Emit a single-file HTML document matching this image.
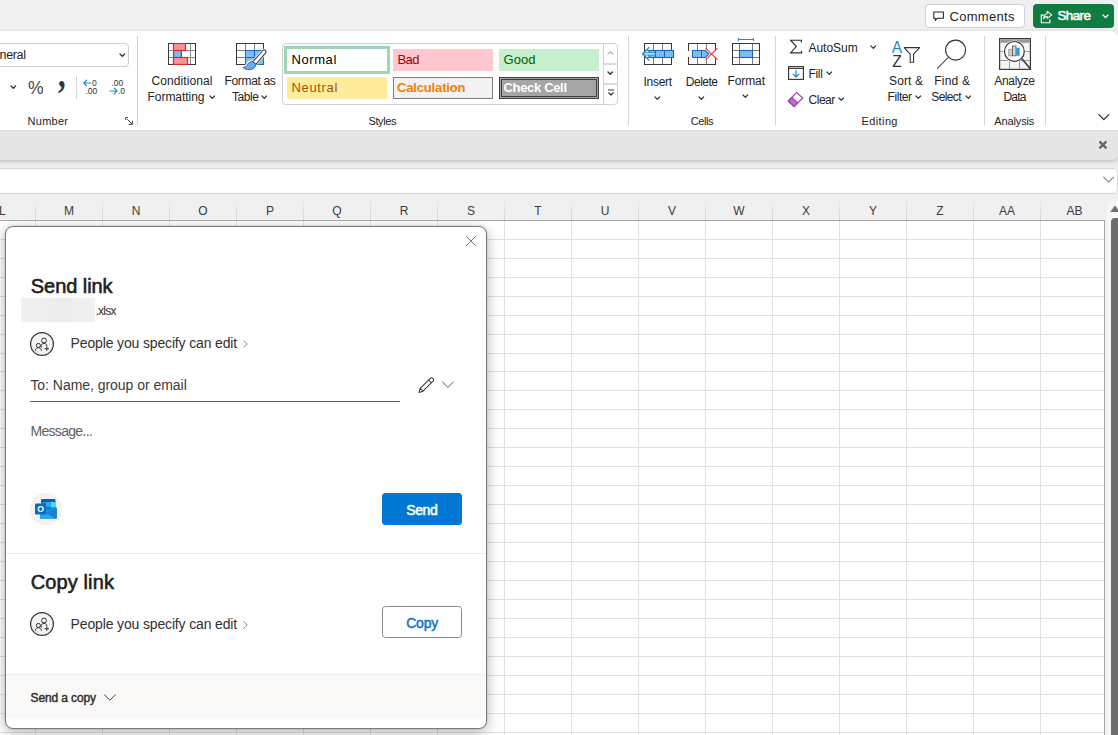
<!DOCTYPE html>
<html><head><meta charset="utf-8"><title>Excel - Send link</title>
<style>
html,body{margin:0;padding:0;}
body{width:1118px;height:735px;overflow:hidden;background:#f0f0f0;position:relative;font-family:"Liberation Sans",sans-serif;}
.t{position:absolute;white-space:nowrap;line-height:1;}
.b{position:absolute;box-sizing:border-box;}
</style></head><body>
<div class="b" style="left:925px;top:4px;width:100px;height:24px;background:#fff;border:1px solid #d1d1d1;border-radius:4px;"></div>
<svg class="b" style="left:933.3px;top:11px;" width="13" height="11" viewBox="0 0 13 11"><path d="M0.8 0.9 H10.4 V7.2 H4.4 L2.3 9.4 V7.2 H0.8 Z" fill="none" stroke="#242424" stroke-width="1.05" stroke-linejoin="round"/></svg>
<span class="t" style="left:949.50px;top:9.70px;font-size:13px;letter-spacing:0.307px;color:#242424;">Comments</span>
<div class="b" style="left:1033px;top:4px;width:81px;height:24px;background:#107c41;border-radius:4px;"></div>
<svg class="b" style="left:1040.4px;top:9.6px;" width="14.3" height="14.3" viewBox="0 0 13 13"><path d="M3.4 4.6 H1.2 V11.6 H9 V8.6" fill="none" stroke="#fff" stroke-width="1.05"/><path d="M6.6 1.2 L10.6 4.4 L6.6 7.6 V5.8 C5 5.8 4 6.5 3.4 8 C3.5 5.2 4.7 3.6 6.6 3.2 Z" fill="none" stroke="#fff" stroke-width="0.95" stroke-linejoin="round"/></svg>
<span class="t" style="left:1057.40px;top:9.47px;font-size:13.5px;letter-spacing:-0.607px;-webkit-text-stroke:0.5px #fff;color:#fff;">Share</span>
<svg class="b" style="left:1101.7px;top:14.2px;" width="7" height="4.6" viewBox="0 0 7 4.6"><path d="M1 1 L3.5 3.6 L6 1" fill="none" stroke="#fff" stroke-width="1.3" stroke-linecap="round" stroke-linejoin="round"/></svg>
<div class="b" style="left:-10px;top:28px;width:1130px;height:3px;background:linear-gradient(#f0f0f0,#e7e7e7);"></div>
<div class="b" style="left:-10px;top:31px;width:1128px;height:99px;background:#fff;border-radius:0 8px 0 0;box-shadow:0 -1px 0 #e6e6e6;"></div>
<div class="b" style="left:136.5px;top:36px;width:1px;height:89px;background:#d4d4d4;"></div>
<div class="b" style="left:628px;top:36px;width:1px;height:89px;background:#d4d4d4;"></div>
<div class="b" style="left:775px;top:36px;width:1px;height:89px;background:#d4d4d4;"></div>
<div class="b" style="left:983.5px;top:36px;width:1px;height:89px;background:#d4d4d4;"></div>
<div class="b" style="left:1045px;top:36px;width:1px;height:89px;background:#d4d4d4;"></div>
<div class="b" style="left:-10px;top:43px;width:138.5px;height:24px;background:#fff;border:1px solid #d1d1d1;border-radius:4px;"></div>
<span class="t" style="left:-0.50px;top:49.42px;font-size:12.5px;letter-spacing:-0.324px;color:#242424;">neral</span>
<svg class="b" style="left:119.1px;top:53.1px;" width="6.6" height="4.4" viewBox="0 0 6.6 4.4"><path d="M1 1 L3.3 3.4 L5.6 1" fill="none" stroke="#333" stroke-width="1.3" stroke-linecap="round" stroke-linejoin="round"/></svg>
<svg class="b" style="left:10.1px;top:85.2px;" width="6.6" height="4.4" viewBox="0 0 6.6 4.4"><path d="M1 1 L3.3 3.4 L5.6 1" fill="none" stroke="#333" stroke-width="1.3" stroke-linecap="round" stroke-linejoin="round"/></svg>
<span class="t" style="left:27.80px;top:77.92px;font-size:19px;color:#484848;transform:scaleX(0.92);transform-origin:left;">%</span>
<span class="t" style="left:58.2px;top:54px;font-size:39px;font-family:'Liberation Serif',serif;font-weight:bold;color:#333;transform:scaleX(0.78);transform-origin:left;">,</span>
<div class="b" style="left:76px;top:76px;width:1px;height:23px;background:#d4d4d4;"></div>
<svg class="b" style="left:83px;top:79px;" width="17" height="16" viewBox="0 0 17 16"><g font-family="Liberation Sans, sans-serif" font-size="8.5" fill="#333"><text x="9" y="7">0</text><text x="2.5" y="15">.00</text><path d="M0.8 4 H8 M3.6 1.2 L0.8 4 L3.6 6.8" fill="none" stroke="#1e8bcd" stroke-width="1.2" stroke-linecap="round" stroke-linejoin="round"/></g></svg>
<svg class="b" style="left:109px;top:79px;" width="17" height="16" viewBox="0 0 17 16"><g font-family="Liberation Sans, sans-serif" font-size="8.5" fill="#333"><text x="2.5" y="7">.00</text><text x="9" y="15">.0</text><path d="M0.8 12 H8 M5.2 9.2 L8 12 L5.2 14.8" fill="none" stroke="#1e8bcd" stroke-width="1.2" stroke-linecap="round" stroke-linejoin="round"/></g></svg>
<span class="t" style="left:27.60px;top:115.69px;font-size:11px;letter-spacing:0.255px;color:#242424;">Number</span>
<svg class="b" style="left:125px;top:117px;" width="9" height="9" viewBox="0 0 9 9"><path d="M0.6 3 V0.6 H3 M2.2 2.2 L7.2 7.2 M7.4 3.6 V7.4 H3.6" fill="none" stroke="#444" stroke-width="1"/></svg>
<svg class="b" style="left:168px;top:43px;" width="28" height="22" viewBox="0 0 28 22"><rect x="0.5" y="0.5" width="27" height="21" fill="#fdfdfd" stroke="#3a3a3a"/><path d="M5.5 1 V21" stroke="#8a8a8a"/><path d="M22.5 1 V21" stroke="#8a8a8a"/><path d="M1 7.5 H27" stroke="#8a8a8a"/><path d="M1 14.5 H27" stroke="#8a8a8a"/><rect x="5.5" y="7.5" width="8" height="7" fill="#7fbcec"/><path d="M5.6 7.5 V14.5 M13.4 7.5 V14.5" stroke="#1565c0" stroke-width="1.2"/><rect x="5.5" y="0.5" width="12" height="7" fill="#fc9299" stroke="#df2a20" stroke-width="1.2"/><rect x="5.5" y="14.5" width="14" height="7" fill="#fc9299" stroke="#df2a20" stroke-width="1.2"/></svg>
<span class="t" style="left:151.50px;top:74.64px;font-size:12px;letter-spacing:0.096px;color:#242424;">Conditional</span>
<span class="t" style="left:147.50px;top:90.64px;font-size:12px;letter-spacing:-0.039px;color:#242424;">Formatting</span>
<svg class="b" style="left:208.5px;top:95.2px;" width="6.6" height="4.4" viewBox="0 0 6.6 4.4"><path d="M1 1 L3.3 3.4 L5.6 1" fill="none" stroke="#333" stroke-width="1.2" stroke-linecap="round" stroke-linejoin="round"/></svg>
<svg class="b" style="left:236px;top:43px;" width="32" height="29" viewBox="0 0 32 29"><rect x="0.5" y="0.5" width="27" height="21" fill="#fdfdfd" stroke="#3a3a3a"/><rect x="10" y="8" width="17.5" height="13.5" fill="#83bbec"/><path d="M9.5 1 V21" stroke="#7a7a7a"/><path d="M18.5 1 V21" stroke="#7a7a7a"/><path d="M1 7.5 H27" stroke="#7a7a7a"/><path d="M1 14.5 H27" stroke="#7a7a7a"/><path d="M9.5 7.5 H27.5 V21.5 H9.5 Z M18.5 7.5 V21.5 M9.5 14.5 H27.5" fill="none" stroke="#1b6ec4" stroke-width="1.1"/><path d="M29.3 7.3 C30.3 8 30 9.4 29.2 10.4 L19.8 21.4 C19.8 25 16.6 27 13.6 27 C10.6 27 8 26 6.6 24.2 C9.4 24.2 10.6 23.2 11.4 21.2 C12.2 19.2 14.2 18 16.4 18.8 L26.4 8 C27.2 7.1 28.4 6.7 29.3 7.3 Z" fill="#fefefe" stroke="#fefefe" stroke-width="2.4" stroke-linejoin="round"/><path d="M29.3 7.3 C30.3 8 30 9.4 29.2 10.4 L19.9 21.3 L16.6 18.9 L26.4 8 C27.2 7.1 28.4 6.7 29.3 7.3 Z" fill="#fff" stroke="#3a3a3a" stroke-width="1.05" stroke-linejoin="round"/><path d="M16.6 18.9 L19.9 21.3 C19.8 24.6 16.8 26.6 13.6 26.6 C10.8 26.6 8.4 25.8 7 24.4 C9.8 24.2 10.9 23 11.7 21.2 C12.5 19.4 14.6 18.2 16.6 18.9 Z" fill="#6aaee9" stroke="#1b6ec4" stroke-width="1" stroke-linejoin="round"/></svg>
<span class="t" style="left:224.50px;top:74.64px;font-size:12px;letter-spacing:-0.339px;color:#242424;">Format as</span>
<span class="t" style="left:232.00px;top:90.64px;font-size:12px;letter-spacing:-0.422px;color:#242424;">Table</span>
<svg class="b" style="left:260.9px;top:95.2px;" width="6.6" height="4.4" viewBox="0 0 6.6 4.4"><path d="M1 1 L3.3 3.4 L5.6 1" fill="none" stroke="#333" stroke-width="1.2" stroke-linecap="round" stroke-linejoin="round"/></svg>
<div class="b" style="left:282px;top:43px;width:336px;height:61.5px;background:#fff;border:1px solid #d1d1d1;border-radius:4px;"></div>
<div class="b" style="left:284px;top:46px;width:106px;height:28px;background:#fff;border:3px solid #9fd5b7;"></div>
<span class="t" style="left:291.50px;top:52.70px;font-size:13px;letter-spacing:0.581px;color:#000;">Normal</span>
<div class="b" style="left:393px;top:49px;width:100px;height:22px;background:#ffc7ce;"></div>
<span class="t" style="left:397.50px;top:52.70px;font-size:13px;letter-spacing:-0.566px;color:#9c0006;">Bad</span>
<div class="b" style="left:499px;top:49px;width:100px;height:22px;background:#c6efce;"></div>
<span class="t" style="left:503.50px;top:52.70px;font-size:13px;letter-spacing:0.066px;color:#006100;">Good</span>
<div class="b" style="left:287px;top:77px;width:99.5px;height:21.5px;background:#ffeb9c;"></div>
<span class="t" style="left:291.50px;top:80.60px;font-size:13px;letter-spacing:0.649px;color:#9c5700;">Neutral</span>
<div class="b" style="left:393px;top:77px;width:100px;height:21.5px;background:#f2f2f2;border:1px solid #7f7f7f;"></div>
<span class="t" style="left:397.00px;top:80.60px;font-size:13px;letter-spacing:-0.157px;font-weight:bold;color:#fa7d00;">Calculation</span>
<div class="b" style="left:499px;top:77px;width:100px;height:21.5px;background:#a5a5a5;border:1px solid #3f3f3f;box-shadow:inset 0 0 0 1px #a5a5a5, inset 0 0 0 2px #3f3f3f;"></div>
<span class="t" style="left:503.50px;top:80.60px;font-size:13px;letter-spacing:-0.330px;font-weight:bold;color:#fff;">Check Cell</span>
<div class="b" style="left:603px;top:43.5px;width:1px;height:60.5px;background:#d1d1d1;"></div>
<div class="b" style="left:604px;top:63px;width:13.5px;height:2px;background:#dcdcdc;"></div>
<div class="b" style="left:604px;top:82.5px;width:13.5px;height:2px;background:#dcdcdc;"></div>
<svg class="b" style="left:606px;top:50px;" width="9" height="6" viewBox="0 0 9 6"><path d="M2 4 L4.5 1.7 L7 4" fill="none" stroke="#b5b5b5" stroke-width="1.2" stroke-linecap="round" stroke-linejoin="round"/></svg>
<svg class="b" style="left:607.2px;top:71.05px;" width="6.4" height="4.3" viewBox="0 0 6.4 4.3"><path d="M1 1 L3.2 3.3 L5.4 1" fill="none" stroke="#333" stroke-width="1.3" stroke-linecap="round" stroke-linejoin="round"/></svg>
<svg class="b" style="left:605.5px;top:88px;" width="10" height="10" viewBox="0 0 10 10"><path d="M2.4 2 H7.6" stroke="#333" stroke-width="1.1" stroke-linecap="round"/><path d="M2.7 4.8 L5 7 L7.3 4.8" fill="none" stroke="#333" stroke-width="1.2" stroke-linecap="round" stroke-linejoin="round"/></svg>
<span class="t" style="left:368.50px;top:115.69px;font-size:11px;letter-spacing:-0.391px;color:#242424;">Styles</span>
<svg class="b" style="left:642px;top:43px;" width="33" height="22" viewBox="0 0 33 22"><rect x="2.5" y="0.5" width="27" height="21" fill="#fdfdfd" stroke="#3a3a3a"/><path d="M11.5 1 V21" stroke="#7a7a7a"/><path d="M20.5 1 V21" stroke="#7a7a7a"/><path d="M3 7.5 H29" stroke="#7a7a7a"/><path d="M3 14.5 H29" stroke="#7a7a7a"/><rect x="7" y="7.5" width="24.5" height="7" fill="#7fbcec" stroke="#1565c0" stroke-width="1.1"/><path d="M13.5 7.5 V14.5 M22.5 7.5 V14.5" stroke="#1565c0"/><path d="M1.8 10.9 H12.4" stroke="#1e8bcd" stroke-width="3.2" stroke-linecap="round"/><path d="M2.6 10.9 H12.2" stroke="#fff" stroke-width="1.2" stroke-linecap="round"/><path d="M7 4.5 L0.9 10.9 L7 17.3" fill="none" stroke="#1e8bcd" stroke-width="1.25" stroke-linecap="round" stroke-linejoin="round"/></svg>
<span class="t" style="left:643.60px;top:75.84px;font-size:12px;letter-spacing:-0.322px;color:#242424;">Insert</span>
<svg class="b" style="left:654px;top:95.6px;" width="6.6" height="4.4" viewBox="0 0 6.6 4.4"><path d="M1 1 L3.3 3.4 L5.6 1" fill="none" stroke="#333" stroke-width="1.2" stroke-linecap="round" stroke-linejoin="round"/></svg>
<svg class="b" style="left:688px;top:43px;" width="31" height="22" viewBox="0 0 31 22"><rect x="0.5" y="0.5" width="27" height="21" fill="#fdfdfd" stroke="#3a3a3a"/><path d="M9.5 1 V21" stroke="#7a7a7a"/><path d="M18.5 1 V21" stroke="#7a7a7a"/><path d="M1 7.5 H27" stroke="#7a7a7a"/><path d="M1 14.5 H27" stroke="#7a7a7a"/><rect x="0" y="8" width="28" height="6" fill="#fbfbfb"/><rect x="1" y="7" width="26" height="8" fill="#fbfbfb"/><path d="M4.5 7.5 H17.2 L20.8 11 L17.2 14.5 H4.5 Z" fill="#7fbcec" stroke="#1565c0" stroke-width="1.1"/><path d="M13.5 7.5 V14.5" stroke="#1565c0"/><path d="M18 5.6 L29 16.4 M29 5.6 L18 16.4" stroke="#e8474c" stroke-width="1.3" stroke-linecap="round"/></svg>
<span class="t" style="left:685.80px;top:75.84px;font-size:12px;letter-spacing:-0.498px;color:#242424;">Delete</span>
<svg class="b" style="left:698.2px;top:95.6px;" width="6.6" height="4.4" viewBox="0 0 6.6 4.4"><path d="M1 1 L3.3 3.4 L5.6 1" fill="none" stroke="#333" stroke-width="1.2" stroke-linecap="round" stroke-linejoin="round"/></svg>
<svg class="b" style="left:732px;top:43px;" width="28" height="22" viewBox="0 0 28 22"><rect x="0.5" y="0.5" width="27" height="21" fill="#fdfdfd" stroke="#3a3a3a"/><path d="M7.5 1 V21" stroke="#7a7a7a"/><path d="M20.5 1 V21" stroke="#7a7a7a"/><path d="M1 7.5 H27" stroke="#7a7a7a"/><path d="M1 14.5 H27" stroke="#7a7a7a"/><rect x="7.5" y="7.5" width="13" height="7" fill="#7fbcec" stroke="#1565c0" stroke-width="1.1"/></svg>
<svg class="b" style="left:737px;top:37px;" width="18" height="5" viewBox="0 0 18 5"><path d="M1.5 1 V4 M16.5 1 V4 M1.5 2.5 H16.5" stroke="#1e8bcd" stroke-width="1.1" fill="none"/></svg>
<span class="t" style="left:727.50px;top:74.64px;font-size:12px;letter-spacing:-0.101px;color:#242424;">Format</span>
<svg class="b" style="left:742.4px;top:94.4px;" width="6.6" height="4.4" viewBox="0 0 6.6 4.4"><path d="M1 1 L3.3 3.4 L5.6 1" fill="none" stroke="#333" stroke-width="1.2" stroke-linecap="round" stroke-linejoin="round"/></svg>
<span class="t" style="left:690.80px;top:115.69px;font-size:11px;letter-spacing:-0.463px;color:#242424;">Cells</span>
<svg class="b" style="left:789px;top:39px;" width="15" height="16" viewBox="0 0 15 16"><path d="M12.4 3.4 V1.2 H1.6 L7.3 7.6 L1.6 13.9 H12.6 V11.7" fill="none" stroke="#333" stroke-width="1.15" stroke-linejoin="miter"/></svg>
<span class="t" style="left:808.50px;top:41.84px;font-size:12px;letter-spacing:-0.027px;color:#242424;">AutoSum</span>
<svg class="b" style="left:870.2px;top:45.4px;" width="6.6" height="4.4" viewBox="0 0 6.6 4.4"><path d="M1 1 L3.3 3.4 L5.6 1" fill="none" stroke="#333" stroke-width="1.2" stroke-linecap="round" stroke-linejoin="round"/></svg>
<svg class="b" style="left:787.5px;top:65.5px;" width="17" height="15" viewBox="0 0 17 15"><rect x="0.6" y="0.6" width="14.8" height="12.8" fill="#fff" stroke="#333" stroke-width="1.1"/><path d="M0.6 2.4 H15.4" stroke="#333" stroke-width="1.1"/><path d="M8 4.4 V11 M5.1 8.1 L8 11 L10.9 8.1" fill="none" stroke="#1e8bcd" stroke-width="1.2" stroke-linecap="round" stroke-linejoin="round"/></svg>
<span class="t" style="left:808.50px;top:68.04px;font-size:12px;letter-spacing:-0.343px;color:#242424;">Fill</span>
<svg class="b" style="left:826.2px;top:71px;" width="6.6" height="4.4" viewBox="0 0 6.6 4.4"><path d="M1 1 L3.3 3.4 L5.6 1" fill="none" stroke="#333" stroke-width="1.2" stroke-linecap="round" stroke-linejoin="round"/></svg>
<svg class="b" style="left:787px;top:90.5px;" width="18" height="17" viewBox="0 0 18 17"><path d="M9.6 1.4 L15.6 7 L7 15.6 L1.4 10 Z" fill="#fff" stroke="#a63fb5" stroke-width="1.2" stroke-linejoin="round"/><path d="M4.9 6.4 L10.6 12 L7 15.6 L1.4 10 Z" fill="#c46ad0" stroke="#a63fb5" stroke-width="1.2" stroke-linejoin="round"/></svg>
<span class="t" style="left:808.50px;top:93.74px;font-size:12px;letter-spacing:-0.469px;color:#242424;">Clear</span>
<svg class="b" style="left:838.4px;top:97.2px;" width="6.6" height="4.4" viewBox="0 0 6.6 4.4"><path d="M1 1 L3.3 3.4 L5.6 1" fill="none" stroke="#333" stroke-width="1.2" stroke-linecap="round" stroke-linejoin="round"/></svg>
<svg class="b" style="left:892px;top:40px;" width="30" height="28" viewBox="0 0 30 28"><g font-family="Liberation Sans, sans-serif" font-size="15.6"><text x="-0.2" y="12.5" fill="#1e8bcd">A</text><text x="0.2" y="26.5" fill="#333">Z</text></g><path d="M12.2 7.6 H27.6 L21.6 14.2 V22.2 H18.2 V14.2 Z" fill="#fff" stroke="#333" stroke-width="1.1" stroke-linejoin="round"/></svg>
<span class="t" style="left:889.00px;top:74.64px;font-size:12px;letter-spacing:0.131px;color:#242424;">Sort &amp;</span>
<span class="t" style="left:887.60px;top:90.64px;font-size:12px;letter-spacing:-0.453px;color:#242424;">Filter</span>
<svg class="b" style="left:915.3px;top:95.2px;" width="6.6" height="4.4" viewBox="0 0 6.6 4.4"><path d="M1 1 L3.3 3.4 L5.6 1" fill="none" stroke="#333" stroke-width="1.2" stroke-linecap="round" stroke-linejoin="round"/></svg>
<svg class="b" style="left:936px;top:38px;" width="32" height="32" viewBox="0 0 32 32"><circle cx="19.6" cy="12.1" r="10" fill="#fdfdfd" stroke="#333" stroke-width="1.15"/><path d="M12.4 19.3 L1.4 30.4" stroke="#555" stroke-width="1.2" stroke-linecap="round"/></svg>
<span class="t" style="left:934.30px;top:74.64px;font-size:12px;letter-spacing:0.203px;color:#242424;">Find &amp;</span>
<span class="t" style="left:931.30px;top:90.64px;font-size:12px;letter-spacing:-0.630px;color:#242424;">Select</span>
<svg class="b" style="left:964.5px;top:95.2px;" width="6.6" height="4.4" viewBox="0 0 6.6 4.4"><path d="M1 1 L3.3 3.4 L5.6 1" fill="none" stroke="#333" stroke-width="1.2" stroke-linecap="round" stroke-linejoin="round"/></svg>
<span class="t" style="left:861.60px;top:115.69px;font-size:11px;letter-spacing:0.377px;color:#242424;">Editing</span>
<svg class="b" style="left:999px;top:38px;" width="32" height="32" viewBox="0 0 32 32"><rect x="0.6" y="0.6" width="30.8" height="30.8" fill="#f4f4f4" stroke="#3a3a3a" stroke-width="1.2"/><rect x="1.2" y="1.2" width="29.6" height="3.6" fill="#9a9a9a"/><path d="M1 13.5 H31" stroke="#9a9a9a"/><path d="M1 22.5 H31" stroke="#9a9a9a"/><path d="M10.5 5 V31" stroke="#9a9a9a"/><path d="M20.5 5 V31" stroke="#9a9a9a"/><circle cx="15.4" cy="13.4" r="11" fill="#f4f4f4"/><circle cx="15.4" cy="13.4" r="9.9" fill="#fcfcfc" stroke="#3a3a3a" stroke-width="1.2"/><rect x="9.8" y="11.6" width="3.4" height="6.2" fill="#d6d6d6" stroke="#8a8a8a" stroke-width="0.8"/><rect x="13.4" y="8" width="3.6" height="9.8" fill="#d6d6d6" stroke="#555" stroke-width="0.8"/><rect x="17.2" y="9.8" width="3.4" height="8" fill="#3a96dd"/><path d="M22.6 20.6 L31.4 30.8" stroke="#3a3a3a" stroke-width="1.6"/></svg>
<span class="t" style="left:994.30px;top:74.64px;font-size:12px;letter-spacing:-0.332px;color:#242424;">Analyze</span>
<span class="t" style="left:1003.50px;top:90.64px;font-size:12px;letter-spacing:-0.816px;color:#242424;">Data</span>
<span class="t" style="left:994.30px;top:115.69px;font-size:11px;letter-spacing:-0.137px;color:#242424;">Analysis</span>
<svg class="b" style="left:1097px;top:112px;" width="14" height="10" viewBox="0 0 14 10"><path d="M1.8 2.6 L6.8 7.6 L11.8 2.6" fill="none" stroke="#333" stroke-width="1.3" stroke-linecap="round" stroke-linejoin="round"/></svg>
<div class="b" style="left:-10px;top:160px;width:1128px;height:8px;background:linear-gradient(#e4e4e4,#f0f0f0);"></div>
<div class="b" style="left:-10px;top:129.5px;width:1128px;height:31.5px;background:#e6e6e6;border-top:1px solid #d9d9d9;border-bottom:1px solid #cfcfcf;border-radius:0 0 7px 0;box-shadow:0 1px 2px rgba(0,0,0,0.12);"></div>
<svg class="b" style="left:1098px;top:140px;" width="10" height="10" viewBox="0 0 10 10"><path d="M1.4 1.4 L8.4 8.4 M8.4 1.4 L1.4 8.4" stroke="#646464" stroke-width="2.2"/></svg>
<div class="b" style="left:-10px;top:168px;width:1128px;height:26px;background:#fff;border:1px solid #d6d6d6;border-radius:0 5px 5px 0;"></div>
<svg class="b" style="left:1102px;top:175px;" width="14" height="10" viewBox="0 0 14 10"><path d="M1.6 2.2 L6.6 7.2 L11.6 2.2" fill="none" stroke="#8a8a8a" stroke-width="1.2" stroke-linecap="round" stroke-linejoin="round"/></svg>
<svg class="b" style="left:0px;top:0px;pointer-events:none;" width="1118" height="735" viewBox="0 0 1118 735"><defs><linearGradient id="hg" gradientUnits="userSpaceOnUse" x1="0" y1="198" x2="0" y2="220"><stop offset="0" stop-color="#f0f0f0"/><stop offset="0.6" stop-color="#dedede"/><stop offset="1" stop-color="#d4d4d4"/></linearGradient></defs><rect x="0" y="221" width="1104" height="514" fill="#fff"/><path d="M0 239.5 H1104" stroke="#e1e1e1"/><path d="M0 258.5 H1104" stroke="#e1e1e1"/><path d="M0 277.5 H1104" stroke="#e1e1e1"/><path d="M0 296.5 H1104" stroke="#e1e1e1"/><path d="M0 315.5 H1104" stroke="#e1e1e1"/><path d="M0 334.5 H1104" stroke="#e1e1e1"/><path d="M0 353.5 H1104" stroke="#e1e1e1"/><path d="M0 371.5 H1104" stroke="#e1e1e1"/><path d="M0 390.5 H1104" stroke="#e1e1e1"/><path d="M0 409.5 H1104" stroke="#e1e1e1"/><path d="M0 428.5 H1104" stroke="#e1e1e1"/><path d="M0 447.5 H1104" stroke="#e1e1e1"/><path d="M0 466.5 H1104" stroke="#e1e1e1"/><path d="M0 485.5 H1104" stroke="#e1e1e1"/><path d="M0 504.5 H1104" stroke="#e1e1e1"/><path d="M0 523.5 H1104" stroke="#e1e1e1"/><path d="M0 542.5 H1104" stroke="#e1e1e1"/><path d="M0 561.5 H1104" stroke="#e1e1e1"/><path d="M0 580.5 H1104" stroke="#e1e1e1"/><path d="M0 599.5 H1104" stroke="#e1e1e1"/><path d="M0 618.5 H1104" stroke="#e1e1e1"/><path d="M0 637.5 H1104" stroke="#e1e1e1"/><path d="M0 656.5 H1104" stroke="#e1e1e1"/><path d="M0 675.5 H1104" stroke="#e1e1e1"/><path d="M0 694.5 H1104" stroke="#e1e1e1"/><path d="M0 713.5 H1104" stroke="#e1e1e1"/><path d="M0 732.5 H1104" stroke="#e1e1e1"/><path d="M35.5 221 V735" stroke="#e1e1e1"/><rect x="35" y="198" width="1" height="22" fill="url(#hg)"/><path d="M102.5 221 V735" stroke="#e1e1e1"/><rect x="102" y="198" width="1" height="22" fill="url(#hg)"/><path d="M169.5 221 V735" stroke="#e1e1e1"/><rect x="169" y="198" width="1" height="22" fill="url(#hg)"/><path d="M236.5 221 V735" stroke="#e1e1e1"/><rect x="236" y="198" width="1" height="22" fill="url(#hg)"/><path d="M303.5 221 V735" stroke="#e1e1e1"/><rect x="303" y="198" width="1" height="22" fill="url(#hg)"/><path d="M370.5 221 V735" stroke="#e1e1e1"/><rect x="370" y="198" width="1" height="22" fill="url(#hg)"/><path d="M437.5 221 V735" stroke="#e1e1e1"/><rect x="437" y="198" width="1" height="22" fill="url(#hg)"/><path d="M504.5 221 V735" stroke="#e1e1e1"/><rect x="504" y="198" width="1" height="22" fill="url(#hg)"/><path d="M571.5 221 V735" stroke="#e1e1e1"/><rect x="571" y="198" width="1" height="22" fill="url(#hg)"/><path d="M638.5 221 V735" stroke="#e1e1e1"/><rect x="638" y="198" width="1" height="22" fill="url(#hg)"/><path d="M705.5 221 V735" stroke="#e1e1e1"/><rect x="705" y="198" width="1" height="22" fill="url(#hg)"/><path d="M772.5 221 V735" stroke="#e1e1e1"/><rect x="772" y="198" width="1" height="22" fill="url(#hg)"/><path d="M839.5 221 V735" stroke="#e1e1e1"/><rect x="839" y="198" width="1" height="22" fill="url(#hg)"/><path d="M906.5 221 V735" stroke="#e1e1e1"/><rect x="906" y="198" width="1" height="22" fill="url(#hg)"/><path d="M973.5 221 V735" stroke="#e1e1e1"/><rect x="973" y="198" width="1" height="22" fill="url(#hg)"/><path d="M1040.5 221 V735" stroke="#e1e1e1"/><rect x="1040" y="198" width="1" height="22" fill="url(#hg)"/><path d="M0 220.5 H1105" stroke="#a6a6a6"/><path d="M1104.5 220 V735" stroke="#a6a6a6"/></svg>
<span class="t" style="left:-1.00px;top:204.64px;font-size:12px;color:#3b3b3b;">L</span>
<span class="t" style="left:64.00px;top:204.64px;font-size:12px;color:#3b3b3b;">M</span>
<span class="t" style="left:131.67px;top:204.64px;font-size:12px;color:#3b3b3b;">N</span>
<span class="t" style="left:198.33px;top:204.64px;font-size:12px;color:#3b3b3b;">O</span>
<span class="t" style="left:266.00px;top:204.64px;font-size:12px;color:#3b3b3b;">P</span>
<span class="t" style="left:332.33px;top:204.64px;font-size:12px;color:#3b3b3b;">Q</span>
<span class="t" style="left:399.67px;top:204.64px;font-size:12px;color:#3b3b3b;">R</span>
<span class="t" style="left:467.00px;top:204.64px;font-size:12px;color:#3b3b3b;">S</span>
<span class="t" style="left:534.33px;top:204.64px;font-size:12px;color:#3b3b3b;">T</span>
<span class="t" style="left:600.67px;top:204.64px;font-size:12px;color:#3b3b3b;">U</span>
<span class="t" style="left:668.00px;top:204.64px;font-size:12px;color:#3b3b3b;">V</span>
<span class="t" style="left:733.34px;top:204.64px;font-size:12px;color:#3b3b3b;">W</span>
<span class="t" style="left:802.00px;top:204.64px;font-size:12px;color:#3b3b3b;">X</span>
<span class="t" style="left:869.00px;top:204.64px;font-size:12px;color:#3b3b3b;">Y</span>
<span class="t" style="left:936.33px;top:204.64px;font-size:12px;color:#3b3b3b;">Z</span>
<span class="t" style="left:999.00px;top:204.64px;font-size:12px;color:#3b3b3b;">AA</span>
<span class="t" style="left:1066.50px;top:204.64px;font-size:12px;color:#3b3b3b;">AB</span>
<div class="b" style="left:1107px;top:201px;width:14px;height:540px;background:#f6f6f6;border-radius:6px 0 0 0;"></div>
<svg class="b" style="left:1110px;top:204px;" width="8" height="9" viewBox="0 0 8 9"><path d="M0.2 8 L5 1.6 L9.8 8 Z" fill="#6e6e6e"/></svg>
<div class="b" style="left:1111px;top:218px;width:12px;height:520px;background:#6e6e6e;border-radius:4px 0 0 0;"></div>
<div class="b" style="left:0;top:221px;width:1104px;height:514px;overflow:hidden;"><div class="b" style="left:5px;top:5px;width:482px;height:503px;background:#fff;border:1px solid #7a7a7a;border-radius:8px;box-shadow:0 3px 13px rgba(0,0,0,0.30), 0 0 2px rgba(0,0,0,0.18);"></div></div>
<svg class="b" style="left:465px;top:235px;" width="12" height="12" viewBox="0 0 12 12"><path d="M1.2 1.2 L10.8 10.8 M10.8 1.2 L1.2 10.8" stroke="#7a7876" stroke-width="1"/></svg>
<span class="t" style="left:30.80px;top:276.07px;font-size:20px;letter-spacing:-0.060px;-webkit-text-stroke:0.6px #201f1e;color:#201f1e;">Send link</span>
<div class="b" style="left:21px;top:298px;width:74px;height:23.5px;background:linear-gradient(90deg,#f0f0f0,#ececec 60%,#f1f1f1);"></div>
<span class="t" style="left:95.50px;top:305.24px;font-size:12px;letter-spacing:-0.750px;color:#323130;">.xlsx</span>
<svg class="b" style="left:30px;top:332px;" width="24" height="24" viewBox="0 0 24 24"><circle cx="12" cy="12" r="11.4" fill="#f3f2f1" stroke="#333231" stroke-width="1.2"/><circle cx="14" cy="8.5" r="2.45" fill="none" stroke="#333231" stroke-width="1"/><path d="M11.2 15.6 C11.1 12.8 12.3 11.3 14 11.3 C15.7 11.3 16.9 12.5 16.9 14.3" fill="none" stroke="#333231" stroke-width="1"/><circle cx="8.4" cy="13.5" r="2.1" fill="none" stroke="#333231" stroke-width="1"/><path d="M5.2 18.8 C5.6 16.6 6.8 15.7 8.4 15.7 C10 15.7 11.1 16.7 11.5 18.8" fill="none" stroke="#333231" stroke-width="1"/><path d="M16.8 14.5 V18.9 M14.6 16.7 H19" stroke="#333231" stroke-width="1"/></svg>
<span class="t" style="left:70.60px;top:335.95px;font-size:14px;letter-spacing:-0.148px;color:#323130;">People you specify can edit</span>
<svg class="b" style="left:242px;top:339px;" width="7" height="10" viewBox="0 0 7 10"><path d="M1.6 1.4 L5.2 5 L1.6 8.6" fill="none" stroke="#8a8886" stroke-width="1"/></svg>
<span class="t" style="left:30.40px;top:377.95px;font-size:14px;letter-spacing:-0.034px;color:#3b3a39;">To: Name, group or email</span>
<div class="b" style="left:30px;top:401px;width:370px;height:1px;background:#0a74d0;"></div>
<svg class="b" style="left:417px;top:376px;" width="18" height="18" viewBox="0 0 18 18"><path d="M13.2 2.4 C14 1.6 15.2 1.6 16 2.4 C16.8 3.2 16.8 4.4 16 5.2 L6 15.2 L2 16.4 L3.2 12.4 Z M11.6 4 L14.4 6.8 M3.4 12.4 L6 15" fill="none" stroke="#3a3938" stroke-width="1.05" stroke-linejoin="round"/></svg>
<svg class="b" style="left:441px;top:380px;" width="14" height="10" viewBox="0 0 14 10"><path d="M1.2 1.8 L6.9 7.4 L12.6 1.8" fill="none" stroke="#605e5c" stroke-width="1"/></svg>
<span class="t" style="left:30.40px;top:424.15px;font-size:14px;letter-spacing:-0.675px;color:#605e5c;">Message...</span>
<svg class="b" style="left:30px;top:493px;" width="32" height="32" viewBox="0 0 32 32"><circle cx="16" cy="16" r="16" fill="#f3f2f1"/><rect x="11" y="6" width="14.5" height="13" rx="1" fill="#0a5fb4"/><rect x="11" y="9" width="5" height="5" fill="#1482d8"/><rect x="16" y="9" width="4.8" height="5" fill="#29a5ea"/><rect x="20.8" y="9" width="4.7" height="5" fill="#50d9ff"/><rect x="11" y="14" width="5" height="5" fill="#0b5cad"/><rect x="16" y="14" width="4.8" height="5" fill="#1174ce"/><rect x="20.8" y="14" width="4.7" height="5" fill="#28a8ea"/><path d="M10 17 L26.8 14.6 V24.6 C26.8 25.2 26.4 25.7 25.8 25.7 H10 Z" fill="#1490df"/><path d="M26.8 14.8 L16 20.4 L25.8 25.7 C26.4 25.7 26.8 25.2 26.8 24.6 Z" fill="#1b7fd2"/><path d="M10 19 V25.7 H25.8 L16 20.4 Z" fill="#28a8ea"/><rect x="5" y="10.6" width="11" height="11" rx="1" fill="#0f6cbd"/><text x="10.5" y="19.4" font-family="Liberation Sans, sans-serif" font-weight="bold" font-size="8.6" fill="#fff" text-anchor="middle">O</text></svg>
<div class="b" style="left:382px;top:493px;width:80px;height:32px;background:#0078d4;border-radius:3.5px;"></div>
<span class="t" style="left:406.20px;top:502.95px;font-size:14px;letter-spacing:-0.366px;-webkit-text-stroke:0.5px #fff;color:#fff;">Send</span>
<div class="b" style="left:6px;top:553px;width:480px;height:1px;background:#edebe9;"></div>
<span class="t" style="left:30.80px;top:572.07px;font-size:20px;letter-spacing:0.105px;-webkit-text-stroke:0.6px #201f1e;color:#201f1e;">Copy link</span>
<svg class="b" style="left:30px;top:612px;" width="24" height="24" viewBox="0 0 24 24"><circle cx="12" cy="12" r="11.4" fill="#f3f2f1" stroke="#333231" stroke-width="1.2"/><circle cx="14" cy="8.5" r="2.45" fill="none" stroke="#333231" stroke-width="1"/><path d="M11.2 15.6 C11.1 12.8 12.3 11.3 14 11.3 C15.7 11.3 16.9 12.5 16.9 14.3" fill="none" stroke="#333231" stroke-width="1"/><circle cx="8.4" cy="13.5" r="2.1" fill="none" stroke="#333231" stroke-width="1"/><path d="M5.2 18.8 C5.6 16.6 6.8 15.7 8.4 15.7 C10 15.7 11.1 16.7 11.5 18.8" fill="none" stroke="#333231" stroke-width="1"/><path d="M16.8 14.5 V18.9 M14.6 16.7 H19" stroke="#333231" stroke-width="1"/></svg>
<span class="t" style="left:70.60px;top:616.55px;font-size:14px;letter-spacing:-0.148px;color:#323130;">People you specify can edit</span>
<svg class="b" style="left:242px;top:619.5px;" width="7" height="10" viewBox="0 0 7 10"><path d="M1.6 1.4 L5.2 5 L1.6 8.6" fill="none" stroke="#8a8886" stroke-width="1"/></svg>
<div class="b" style="left:382px;top:606px;width:80px;height:32px;background:#fff;border:1px solid #8a8886;border-radius:3.5px;"></div>
<span class="t" style="left:406.20px;top:616.15px;font-size:14px;letter-spacing:-0.194px;-webkit-text-stroke:0.5px #0f74cf;color:#0f74cf;">Copy</span>
<div class="b" style="left:6px;top:674px;width:479px;height:44px;background:#faf9f8;border-top:1px solid #edebe9;"></div>
<span class="t" style="left:30.50px;top:691.54px;font-size:12px;letter-spacing:-0.122px;-webkit-text-stroke:0.45px #323130;color:#323130;">Send a copy</span>
<svg class="b" style="left:103.3px;top:692.5px;" width="14" height="10" viewBox="0 0 14 10"><path d="M1.2 1.6 L6.9 7.2 L12.6 1.6" fill="none" stroke="#4a4846" stroke-width="1"/></svg>
</body></html>
